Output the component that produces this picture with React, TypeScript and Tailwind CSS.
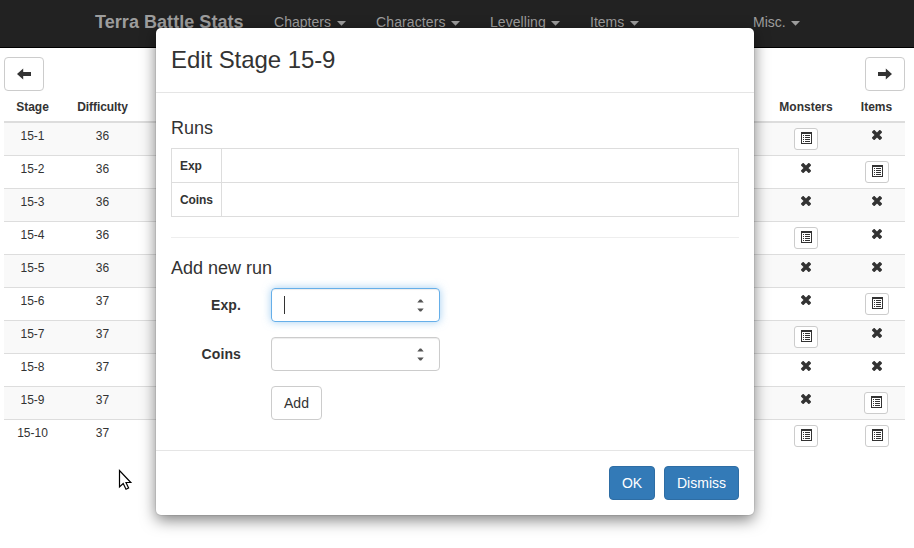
import React from "react";

const navItems = [
  { label: "Chapters", width: "w-[102px]", text: "w-[58px] tracking-[0.02px]" },
  { label: "Characters", width: "w-[114px]", text: "w-[70px] tracking-[0.12px]" },
  { label: "Levelling", width: "w-[100px]", text: "w-[56px] tracking-[0.05px]" },
  { label: "Items", width: "w-[163px]", text: "w-[35px]" },
  { label: "Misc.", width: "w-[60px]", text: "w-[33px]" },
];

const rows = [
  { stage: "15-1", difficulty: 36, monsters: true, items: false },
  { stage: "15-2", difficulty: 36, monsters: false, items: true },
  { stage: "15-3", difficulty: 36, monsters: false, items: false },
  { stage: "15-4", difficulty: 36, monsters: true, items: false },
  { stage: "15-5", difficulty: 36, monsters: false, items: false },
  { stage: "15-6", difficulty: 37, monsters: false, items: true },
  { stage: "15-7", difficulty: 37, monsters: true, items: false },
  { stage: "15-8", difficulty: 37, monsters: false, items: false },
  { stage: "15-9", difficulty: 37, monsters: false, items: true, active: true },
  { stage: "15-10", difficulty: 37, monsters: true, items: true },
];

function ArrowIcon({ flip = false }: { flip?: boolean }) {
  return (
    <svg width="14" height="12" viewBox="0 0 14 12" className={flip ? "-scale-x-100" : ""}>
      <path d="M0 6 L6.2 .6 V4 H14 V8 H6.2 V11.4 Z" fill="#333" />
    </svg>
  );
}

function ListIcon() {
  return (
    <svg width="11" height="12" viewBox="0 0 11 12" shapeRendering="crispEdges" fill="#333">
      <path d="M0 0H11V12H0Z M1 2V11H10V2Z" fillRule="evenodd" />
      <path d="M2 3h1v1h-1z M4 3h5v1h-5z M2 5h1v1h-1z M4 5h5v1h-5z M2 7h1v1h-1z M4 7h5v1h-5z M2 9h1v1h-1z M4 9h5v1h-5z" />
    </svg>
  );
}

function CrossIcon() {
  return (
    <svg width="10" height="10" viewBox="0 0 10 10" className="mt-[7px]">
      <path d="M2.2 2.2L7.8 7.8M7.8 2.2L2.2 7.8" stroke="#333" strokeWidth="3.6" strokeLinecap="square" />
    </svg>
  );
}

function Cell({ on }: { on: boolean }) {
  return on ? (
    <button className="mt-[5px] flex h-[22px] w-6 items-start justify-center rounded-[3px] border border-[#ccc] bg-white pl-px pt-[3px]">
      <ListIcon />
    </button>
  ) : (
    <CrossIcon />
  );
}

function Spinner() {
  return (
    <svg width="7" height="13" viewBox="0 0 7 13" fill="#555">
      <path d="M.3 3.6L2.8 .6H4.2L6.7 3.6Z M.3 9.4L2.8 12.4H4.2L6.7 9.4Z" />
    </svg>
  );
}

function Field({ label, focused = false }: { label: string; focused?: boolean }) {
  return (
    <div className="mb-[15px] flex h-[34px] items-center">
      <div className="w-[70px] text-right text-[14px] font-bold leading-5 tracking-[0.1px]">{label}</div>
      <div
        className={
          focused
            ? "ml-[30px] flex h-[34px] w-[169px] items-center justify-between rounded border border-[#66afe9] pl-3 pr-[15px] shadow-[inset_0_1px_1px_rgba(0,0,0,.075),0_0_8px_rgba(102,175,233,.6)]"
            : "ml-[30px] flex h-[34px] w-[169px] items-center justify-between rounded border border-[#ccc] pl-3 pr-[15px] shadow-[inset_0_1px_1px_rgba(0,0,0,.075)]"
        }
      >
        <span className={focused ? "h-[18px] w-px bg-[#333]" : ""} />
        <Spinner />
      </div>
    </div>
  );
}

function Modal() {
  return (
    <div className="absolute left-[156px] top-[28px] flex h-[487px] w-[598px] flex-col rounded-[5px] bg-white shadow-[0_5px_15px_rgba(0,0,0,.5),0_0_0_1px_rgba(0,0,0,.06)]">
      <header className="h-[65px] border-b border-[#e5e5e5] px-[15px] pt-[15px]">
        <h4 className="text-[24px] leading-[33px] tracking-[-0.07px]">Edit Stage 15-9</h4>
      </header>
      <main className="h-[357px] px-[15px] pt-[25px]">
        <h4 className="h-[30px] text-[18px] leading-5">Runs</h4>
        <table className="w-[568px] table-fixed border-collapse text-[12px]">
          <tbody>
            {["Exp", "Coins"].map((name) => (
              <tr key={name} className="h-[34px]">
                <th className="w-[50px] border border-[#ddd] pl-2 text-left tracking-[-0.1px]">{name}</th>
                <td className="border border-[#ddd]" />
              </tr>
            ))}
          </tbody>
        </table>
        <hr className="mt-5 border-[#eee]" />
        <h4 className="mt-5 h-[30px] text-[18px] leading-5">Add new run</h4>
        <Field label="Exp." focused />
        <Field label="Coins" />
        <button className="ml-[100px] h-[34px] w-[51px] rounded border border-[#ccc] text-[14px]">Add</button>
      </main>
      <footer className="flex justify-end gap-[9px] border-t border-[#e5e5e5] p-[15px] text-[14px] text-white">
        <button className="h-[34px] w-[46px] rounded border border-[#2e6da4] bg-[#337ab7]">OK</button>
        <button className="h-[34px] w-[75px] rounded border border-[#2e6da4] bg-[#337ab7]">Dismiss</button>
      </footer>
    </div>
  );
}

function Pointer() {
  return (
    <svg className="absolute left-[118px] top-[469px]" width="15" height="22" viewBox="0 0 15 22">
      <path d="M1.5 1.5V18L5.2 14.6L8 20.3L10.6 19L8 13.5H12.8Z" fill="#fff" stroke="#000" strokeWidth="1.2" />
    </svg>
  );
}

export default function App() {
  return (
    <div className="relative h-[548px] w-[914px] overflow-hidden bg-white font-['Liberation_Sans',Arial,sans-serif] text-[#333]">
      <nav className="flex h-12 items-start border-b border-black bg-[#222] pt-3 text-[#9d9d9d]">
        <div className="ml-[95px] w-[179px] text-[18px] font-bold leading-5 tracking-[0.05px]">Terra Battle Stats</div>
        {navItems.map((item) => (
          <div key={item.label} className={`${item.width} flex text-[14px] leading-5`}>
            <span className={`${item.text} whitespace-nowrap`}>{item.label}</span>
            <svg width="9" height="5" viewBox="0 0 9 5" className="ml-[5px] mt-[9px]" fill="currentColor">
              <path d="M0 0H9L4.5 4.8Z" />
            </svg>
          </div>
        ))}
      </nav>
      <div className="flex justify-between pl-1 pr-[9px] pt-[9px]">
        <button className="flex h-[34px] w-10 items-center justify-center rounded border border-[#ccc]">
          <ArrowIcon />
        </button>
        <button className="flex h-[34px] w-10 items-center justify-center rounded border border-[#ccc]">
          <ArrowIcon flip />
        </button>
      </div>
      <div className="ml-1 w-[901px] text-[12px]">
        <div className="flex h-8 border-b-2 border-[#ddd] pt-2 text-center font-bold leading-[17px]">
          <div className="w-[57px]">Stage</div>
          <div className="w-[83px] tracking-[-0.08px]">Difficulty</div>
          <div className="ml-auto w-[84px]">Monsters</div>
          <div className="w-[57px]">Items</div>
        </div>
        {rows.map((row) => (
          <div
            key={row.stage}
            className="flex h-[33px] border-b border-[#ddd] text-center leading-[17px] last:border-b-0 odd:bg-white even:bg-[#f9f9f9]"
          >
            <div className="w-[57px] pt-[5px]">{row.stage}</div>
            <div className="w-[83px] pt-[5px]">{row.difficulty}</div>
            <div className="ml-auto flex w-[84px] items-start justify-center">
              <Cell on={row.monsters} />
            </div>
            <div className={row.active ? "flex w-[57px] items-start justify-center pr-[2px]" : "flex w-[57px] items-start justify-center"}>
              <Cell on={row.items} />
            </div>
          </div>
        ))}
      </div>
      <Pointer />
      <Modal />
    </div>
  );
}
